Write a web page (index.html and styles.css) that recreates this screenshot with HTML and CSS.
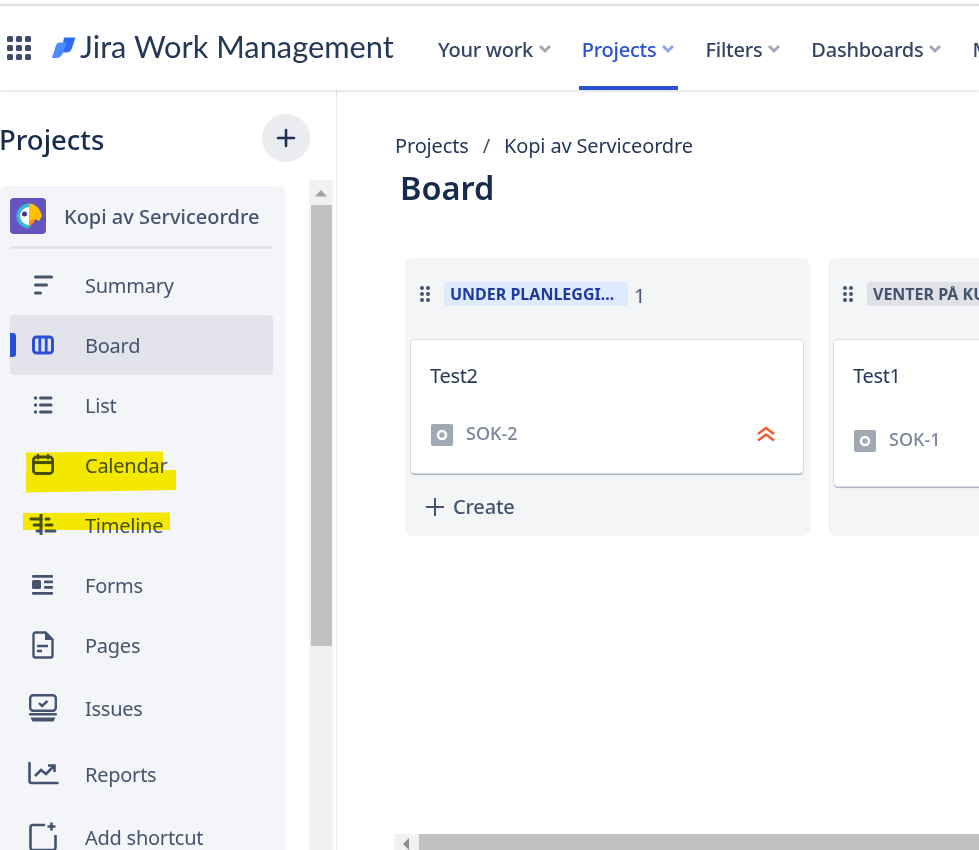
FILE: index.html
```html
<!DOCTYPE html>
<html lang="en">
<head>
<meta charset="utf-8">
<title>Board</title>
<link rel="stylesheet" href="styles.css">
</head>
<body>
<div class="page">
  <header class="topbar">
    <svg class="apps" width="26" height="26" viewBox="0 0 26 26"><g fill="#3d4a68"><rect x="1" y="1" width="6" height="6" rx="1.6"/><rect x="10" y="1" width="6" height="6" rx="1.6"/><rect x="19" y="1" width="6" height="6" rx="1.6"/><rect x="1" y="10" width="6" height="6" rx="1.6"/><rect x="10" y="10" width="6" height="6" rx="1.6"/><rect x="19" y="10" width="6" height="6" rx="1.6"/><rect x="1" y="19" width="6" height="6" rx="1.6"/><rect x="10" y="19" width="6" height="6" rx="1.6"/><rect x="19" y="19" width="6" height="6" rx="1.6"/></g></svg>
    <div class="brand">
      <svg width="24" height="22" viewBox="0 0 24 22"><path d="M12 0.500H23.500L20 11c-1 3-3 4.500-6 4.500H9z" fill="#2f6bf0"/><path d="M7 5.500H14.500L11 15.500c-1 3.500-3.500 5.500-6.500 5.500H0L3.500 9.500C4.500 6.800 5.500 5.500 7 5.500z" fill="#4c8dff"/></svg>
      <span class="brand-name">Jira Work Management</span>
    </div>
    <nav class="topnav">
      <a class="topnav-item">Your work <svg class="chev" width="14" height="10" viewBox="0 0 14 10"><path d="M2 2l5 5 5-5" fill="none" stroke="#a2a8b6" stroke-width="3"/></svg></a>
      <a class="topnav-item topnav-active">Projects <svg class="chev" width="14" height="10" viewBox="0 0 14 10"><path d="M2 2l5 5 5-5" fill="none" stroke="#8fa6ec" stroke-width="3"/></svg></a>
      <a class="topnav-item">Filters <svg class="chev" width="14" height="10" viewBox="0 0 14 10"><path d="M2 2l5 5 5-5" fill="none" stroke="#a2a8b6" stroke-width="3"/></svg></a>
      <a class="topnav-item">Dashboards <svg class="chev" width="14" height="10" viewBox="0 0 14 10"><path d="M2 2l5 5 5-5" fill="none" stroke="#a2a8b6" stroke-width="3"/></svg></a>
      <a class="topnav-item">More</a>
    </nav>
  </header>

  <div class="content">
    <aside class="sidebar">
      <div class="side-head">
        <h2 class="side-title">Projects</h2>
        <button class="add-btn"><svg width="20" height="20" viewBox="0 0 20 20"><path d="M10 2v16M2 10h16" stroke="#1f2f50" stroke-width="2.600" stroke-linecap="round"/></svg></button>
      </div>
      <div class="side-body">
        <div class="panel">
          <div class="project">
            <svg class="project-logo" width="36" height="36" viewBox="0 0 36 36"><rect width="36" height="36" rx="4" fill="#6554c0"/><path d="M19 5.500a12.500 12.500 0 1 0 0 25z" fill="#37b6d6"/><path d="M19 9a9 9 0 1 0 0 18z" fill="#fff"/><circle cx="14.500" cy="16" r="2.500" fill="#403294"/><path d="M19 5.500c6 0 11 4.500 13 12.500l-3 5-4-2-6 8.500z" fill="#fec100"/><path d="M19 23l6-2-1 3.500-5 4z" fill="#ff8b00"/></svg>
            <span class="project-name">Kopi av Serviceordre</span>
          </div>
          <ul class="menu">
            <li class="menu-item">
              <svg class="ico" width="32" height="32" viewBox="0 0 32 32"><path d="M8.500 8h16M8.500 16h11M8.500 24h5" stroke="#44546f" stroke-width="3" stroke-linecap="round"/></svg>
              <span>Summary</span>
            </li>
            <li class="menu-item menu-active">
              <svg class="ico" width="32" height="32" viewBox="0 0 32 32"><rect x="6.500" y="8" width="19" height="16" rx="3" fill="#dfe6fb" stroke="#2a50d8" stroke-width="3"/><path d="M12.800 8v16M19.200 8v16" stroke="#2a50d8" stroke-width="2.800"/></svg>
              <span>Board</span>
            </li>
            <li class="menu-item">
              <svg class="ico" width="32" height="32" viewBox="0 0 32 32"><path d="M13.500 9h10.500M13.500 16h10.500M13.500 23h10.500" stroke="#44546f" stroke-width="3" stroke-linecap="round"/><circle cx="8.500" cy="9" r="1.700" fill="#44546f"/><circle cx="8.500" cy="16" r="1.700" fill="#44546f"/><circle cx="8.500" cy="23" r="1.700" fill="#44546f"/></svg>
              <span>List</span>
            </li>
            <li class="menu-item">
              <svg class="ico" width="32" height="32" viewBox="0 0 32 32"><rect x="6.400" y="8" width="19.200" height="16.500" rx="3" fill="none" stroke="#44546f" stroke-width="2.800"/><path d="M6 13.500h20" stroke="#44546f" stroke-width="3.200"/><path d="M11 6v3.500M21 6v3.500" stroke="#44546f" stroke-width="2.400" stroke-linecap="round"/></svg>
              <span>Calendar</span>
            </li>
            <li class="menu-item">
              <svg class="ico" width="32" height="32" viewBox="0 0 32 32"><path d="M4 10h10M7 16h7M10 22h4M19 10h3M19 16h6M19 22h9" stroke="#44546f" stroke-width="3" stroke-linecap="round"/><path d="M14 5v21" stroke="#44546f" stroke-width="3"/></svg>
              <span>Timeline</span>
            </li>
            <li class="menu-item">
              <svg class="ico" width="32" height="32" viewBox="0 0 32 32"><rect x="5" y="6" width="21" height="2.800" rx="1" fill="#44546f"/><rect x="5" y="11" width="9" height="9" rx="1.500" fill="#44546f"/><rect x="17" y="11.500" width="9" height="2.800" rx="1" fill="#44546f"/><rect x="17" y="17" width="9" height="2.800" rx="1" fill="#44546f"/><rect x="5" y="23" width="21" height="2.800" rx="1" fill="#44546f"/></svg>
              <span>Forms</span>
            </li>
            <li class="menu-item">
              <svg class="ico" width="32" height="32" viewBox="0 0 32 32"><path d="M8.500 3.500h10l7 7v16a2 2 0 0 1-2 2h-15a2 2 0 0 1-2-2v-21a2 2 0 0 1 2-2z" fill="none" stroke="#44546f" stroke-width="2.400"/><path d="M18 3.500v7.500h7.500z" fill="#44546f"/><path d="M10 17h11M10 22h5" stroke="#44546f" stroke-width="2.600"/></svg>
              <span>Pages</span>
            </li>
            <li class="menu-item menu-issues">
              <svg class="ico" width="32" height="32" viewBox="0 0 32 32"><rect x="3.200" y="3.200" width="25.600" height="15.600" rx="3" fill="none" stroke="#44546f" stroke-width="2.400"/><path d="M12 11l3 3 5.500-5" fill="none" stroke="#44546f" stroke-width="2.400"/><rect x="2" y="21" width="28" height="2.600" rx="1" fill="#44546f"/><path d="M3.500 25.500h25l-2 4h-21z" fill="#44546f"/></svg>
              <span>Issues</span>
            </li>
            <li class="menu-item menu-reports">
              <svg class="ico" width="32" height="32" viewBox="0 0 32 32"><path d="M2.500 5v18a2 2 0 0 0 2 2h26" fill="none" stroke="#44546f" stroke-width="2.600" stroke-linecap="round"/><path d="M8 18l6-6 5 4 8-8M21 7.500h6.500V14" fill="none" stroke="#44546f" stroke-width="2.600"/></svg>
              <span>Reports</span>
            </li>
            <li class="menu-item menu-add">
              <svg class="ico" width="32" height="32" viewBox="0 0 32 32"><path d="M18 4H6a2.500 2.500 0 0 0-2.500 2.500v20A2.500 2.500 0 0 0 6 29h20a2.500 2.500 0 0 0 2.500-2.500V14" fill="none" stroke="#44546f" stroke-width="2.600"/><path d="M24.500 1.500v8M20.500 5.500h8" stroke="#44546f" stroke-width="2.600"/></svg>
              <span>Add shortcut</span>
            </li>
          </ul>
        </div>
        <div class="vscroll">
          <svg class="vscroll-arrow" width="24" height="23" viewBox="0 0 24 23"><path d="M12 10l6 6.500H6z" fill="#a3a3a3"/></svg>
          <div class="vscroll-thumb"></div>
        </div>
      </div>
    </aside>

    <main class="main">
      <div class="crumbs"><span>Projects</span><span class="crumb-sep">/</span><span>Kopi av Serviceordre</span></div>
      <h1 class="title">Board</h1>
      <div class="columns">
        <section class="col">
          <div class="col-head">
            <svg class="grip" width="10" height="16" viewBox="0 0 10 16"><g fill="#44546f"><circle cx="2" cy="2" r="2"/><circle cx="8" cy="2" r="2"/><circle cx="2" cy="8" r="2"/><circle cx="8" cy="8" r="2"/><circle cx="2" cy="14" r="2"/><circle cx="8" cy="14" r="2"/></g></svg>
            <span class="lozenge lozenge-blue">UNDER PLANLEGGI...</span>
            <span class="count">1</span>
          </div>
          <article class="card">
            <div class="card-title">Test2</div>
            <div class="card-foot">
              <svg class="type" width="22" height="24" viewBox="0 0 22 24"><rect y="1" width="22" height="22" rx="2" fill="#a0a8b4"/><circle cx="11" cy="12" r="4" fill="none" stroke="#fff" stroke-width="2.400"/></svg>
              <span class="key">SOK-2</span>
              <svg class="prio" width="20" height="16" viewBox="0 0 20 16"><path d="M2 8l8-6 8 6M2 14.500l8-6 8 6" fill="none" stroke="#f15a2b" stroke-width="2.500"/></svg>
            </div>
          </article>
          <div class="create"><svg width="18" height="18" viewBox="0 0 18 18"><path d="M9 0v18M0 9h18" stroke="#44546f" stroke-width="2"/></svg><span>Create</span></div>
        </section>
        <section class="col">
          <div class="col-head">
            <svg class="grip" width="10" height="16" viewBox="0 0 10 16"><g fill="#44546f"><circle cx="2" cy="2" r="2"/><circle cx="8" cy="2" r="2"/><circle cx="2" cy="8" r="2"/><circle cx="8" cy="8" r="2"/><circle cx="2" cy="14" r="2"/><circle cx="8" cy="14" r="2"/></g></svg>
            <span class="lozenge lozenge-grey">VENTER PÅ KUNDE</span>
          </div>
          <article class="card card-tall">
            <div class="card-title">Test1</div>
            <div class="card-foot card-foot-low">
              <svg class="type" width="22" height="24" viewBox="0 0 22 24"><rect y="1" width="22" height="22" rx="2" fill="#a0a8b4"/><circle cx="11" cy="12" r="4" fill="none" stroke="#fff" stroke-width="2.400"/></svg>
              <span class="key">SOK-1</span>
            </div>
          </article>
        </section>
      </div>
      <div class="hscroll">
        <svg class="hscroll-arrow" width="25" height="16" viewBox="0 0 25 16"><path d="M9 10l6-6v12z" fill="#8e8e8e"/></svg>
        <div class="hscroll-thumb"></div>
      </div>
    </main>
  </div>

  <svg class="marker" width="200" height="100" viewBox="0 0 200 100"><path d="M26 2.500l137-1 1 18.500 12 0 0 20-150 2.500-0.500-19 1-0.500z" fill="#fff200"/><path d="M23 63l147-0.500 0 17.500-147 0z" fill="#fff200"/></svg>
</div>
</body>
</html>
```

FILE: styles.css
```css
html, body {
  margin: 0;
  padding: 0;
  background: #fff;
}
.page {
  position: relative;
  width: 979px;
  height: 850px;
  overflow: hidden;
  display: flex;
  flex-direction: column;
  font-family: "Noto Sans", "Open Sans", sans-serif;
  color: #44546f;
}
.topbar {
  flex: none;
  height: 84px;
  margin-top: 4px;
  border-top: 2px solid #dfdfdf;
  display: flex;
  align-items: center;
  background: #fff;
  box-shadow: 0 1px 3px rgba(9, 30, 66, 0.18);
  position: relative;
  z-index: 2;
  white-space: nowrap;
}
.apps { margin-left: 6px; flex: none; }
.brand { display: flex; align-items: center; margin-left: 20px; gap: 4px; flex: none; }
.brand-name { font-family: "Lato", sans-serif; font-size: 30.800px; line-height: 40px; margin-bottom: 2px; color: #253858; width: 314px; }
.topnav { display: flex; margin-left: 41px; height: 100%; flex: none; }
.topnav-item {
  display: flex;
  align-items: center;
  gap: 5px;
  font-size: 20px;
  letter-spacing: -0.25px;
  font-weight: 500;
  color: #344563;
  padding: 6px 3px 0;
  margin-right: 24px;
  border-bottom: 4px solid transparent;
  box-sizing: border-box;
  height: 84px;
}
.topnav-active { color: #2a50d8; border-bottom-color: #2a50d8; }
.content { flex: 1; display: flex; min-height: 0; }
.sidebar {
  flex: none;
  width: 336px;
  border-right: 1px solid #e6e7ec;
  display: flex;
  flex-direction: column;
  min-height: 0;
}
.side-head {
  flex: none;
  height: 90px;
  display: flex;
  justify-content: space-between;
  align-items: flex-start;
  padding-right: 26px;
}
.side-title { margin: 30px 0 0 -1px; font-size: 27.500px; line-height: 40px; font-weight: 500; color: #172b4d; }
.add-btn {
  width: 48px; height: 48px; margin-top: 24px; border: 0; border-radius: 50%;
  background: #ebecf0; display: flex; align-items: center; justify-content: center; padding: 0;
}
.side-body { flex: 1; display: flex; min-height: 0; align-items: flex-start; }
.panel {
  width: 285px;
  height: 700px;
  margin-top: 6px;
  background: #f4f5f8;
  border-radius: 6px 6px 0 0;
  padding: 0 12px 0 10px;
  box-sizing: border-box;
  flex: none;
}
.project {
  display: flex;
  align-items: center;
  gap: 18px;
  height: 60px;
  border-bottom: 3px solid #e4e6ee;
}
.project-logo { flex: none; }
.project-name { font-size: 20px; line-height: 28px; padding-top: 2px; font-weight: 500; color: #44546f; white-space: nowrap; }
.menu { list-style: none; margin: 6px 0 0; padding: 0; }
.menu-item {
  position: relative;
  display: flex;
  align-items: center;
  gap: 26px;
  height: 60px;
  padding-left: 17px;
  font-size: 20px;
  letter-spacing: -0.25px;
  border-radius: 4px;
  color: #44546f;
  white-space: nowrap;
}
.menu-active { background: #e3e4eb; }
.menu-active::before {
  content: "";
  position: absolute;
  left: 0; top: 18px;
  width: 6px; height: 24px;
  border-radius: 0 3px 3px 0;
  background: #2a50d8;
}
.menu-issues { height: 66px; }
.menu-reports { height: 66px; }
.menu-add { height: 60px; }
.ico { flex: none; }
.vscroll { margin-left: 24px; width: 24px; height: 670px; background: #f1f1f1; flex: none; }
.vscroll-arrow { display: block; }
.vscroll-thumb { margin: 2px 2px 0; width: 21px; height: 441px; background: #c1c1c1; }
.main {
  flex: 1;
  min-width: 0;
  position: relative;
  padding: 42px 0 0 58px;
  box-sizing: border-box;
}
.crumbs { display: flex; gap: 14px; font-size: 20px; letter-spacing: -0.15px; line-height: 28px; color: #253858; white-space: nowrap; }
.crumb-sep { color: #44546f; }
.title { margin: 5px 0 0 5px; font-size: 32.500px; line-height: 46px; font-weight: 600; color: #172b4d; }
.columns { display: flex; gap: 18px; margin: 47px 0 0 10px; align-items: stretch; }
.col { flex: none; width: 405px; height: 278px; background: #f4f5f7; border-radius: 8px; padding: 0 7px 0 6px; box-sizing: border-box; }
.col-head { display: flex; align-items: center; height: 72px; margin-bottom: 10px; padding-left: 9px; box-sizing: border-box; white-space: nowrap; }
.grip { flex: none; }
.lozenge { margin-left: 14px; font-size: 16px; font-weight: 700; line-height: 24px; border-radius: 4px; padding: 0 6px; }
.lozenge-blue { background: #deebff; color: #1f3a9e; width: 172px; white-space: nowrap; }
.lozenge-grey { background: #dfe1e6; color: #44546f; }
.count { margin-left: 6px; padding-top: 2px; font-size: 20px; color: #44546f; }
.card {
  background: #fff;
  height: 133px;
  border-radius: 4px;
  box-shadow: 0 0 0 1px #d9dbe4, 0 2px 1px #a5adba;
  padding: 21px 19px 0;
  box-sizing: border-box;
}
.card-tall { height: 146px; }
.card-title { font-size: 20px; letter-spacing: -0.3px; line-height: 30px; color: #253858; }
.card-foot { display: flex; align-items: center; margin-top: 30px; }
.card-foot-low { margin-top: 36px; }
.type { flex: none; margin-left: 1px; }
.key { margin-left: 13px; margin-bottom: 4px; font-size: 18px; font-weight: 500; color: #7a869a; }
.prio { margin-left: auto; margin-right: 8px; margin-bottom: 2px; }
.create { display: flex; align-items: center; gap: 9px; margin: 20px 0 0 15px; font-size: 20px; letter-spacing: -0.2px; font-weight: 500; color: #44546f; }
.hscroll { position: absolute; left: 57px; right: 0; bottom: 0; height: 16px; background: #f1f1f1; display: flex; }
.hscroll-arrow { flex: none; }
.hscroll-thumb { flex: 1; background: #c1c1c1; }
.marker { position: absolute; left: 0; top: 450px; mix-blend-mode: multiply; pointer-events: none; }
```
